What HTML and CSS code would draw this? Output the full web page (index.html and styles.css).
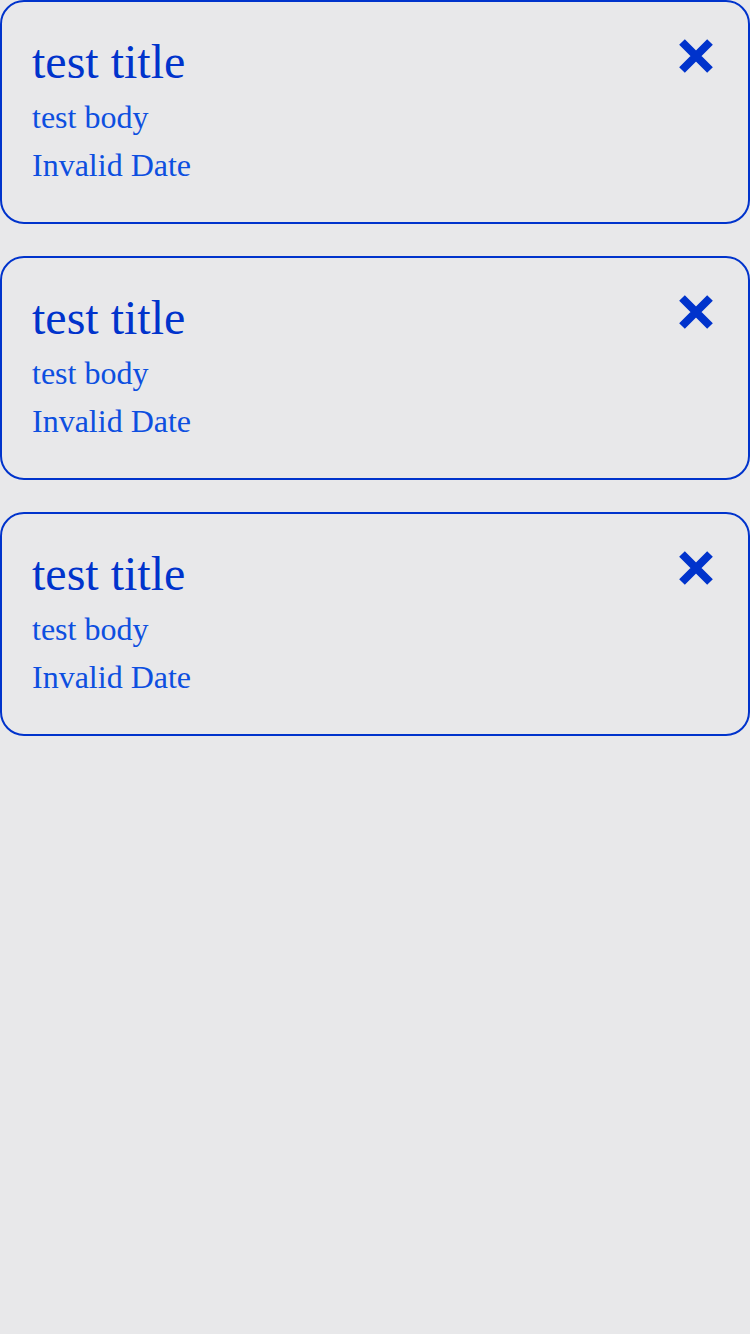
FILE: index.html
```html
<!DOCTYPE html>
<html>
<head>
<meta charset="utf-8">
<link rel="stylesheet" href="styles.css">
</head>
<body>
<div class="list">
  <div class="card">
    <div class="text">
      <div class="title">test title</div>
      <div class="line">test body</div>
      <div class="line">Invalid Date</div>
    </div>
    <svg class="close" viewBox="0 0 36 36"><path d="M4 4L32 32M32 4L4 32"/></svg>
  </div>
  <div class="card">
    <div class="text">
      <div class="title">test title</div>
      <div class="line">test body</div>
      <div class="line">Invalid Date</div>
    </div>
    <svg class="close" viewBox="0 0 36 36"><path d="M4 4L32 32M32 4L4 32"/></svg>
  </div>
  <div class="card">
    <div class="text">
      <div class="title">test title</div>
      <div class="line">test body</div>
      <div class="line">Invalid Date</div>
    </div>
    <svg class="close" viewBox="0 0 36 36"><path d="M4 4L32 32M32 4L4 32"/></svg>
  </div>
</div>
</body>
</html>
```
FILE: styles.css
```css
html, body {
  margin: 0;
  padding: 0;
  background: #e8e8ea;
  height: 100%;
}
body {
  font-family: "Liberation Serif", "Times New Roman", serif;
}
.list {
  display: flex;
  flex-direction: column;
  gap: 32px;
}
.card {
  box-sizing: border-box;
  height: 224px;
  border: 2px solid #0033cc;
  border-radius: 24px;
  padding: 36px 34px 0 30px;
  display: flex;
  justify-content: space-between;
  align-items: flex-start;
}
.title {
  font-size: 48px;
  line-height: 48px;
  color: #0033cc;
  margin-bottom: 7px;
}
.line {
  font-size: 32px;
  line-height: 48px;
  color: #0d4fe0;
}
.close {
  width: 36px;
  height: 36px;
  margin-top: 0;
}
.close path {
  stroke: #0033cc;
  stroke-width: 8;
  fill: none;
}
```
